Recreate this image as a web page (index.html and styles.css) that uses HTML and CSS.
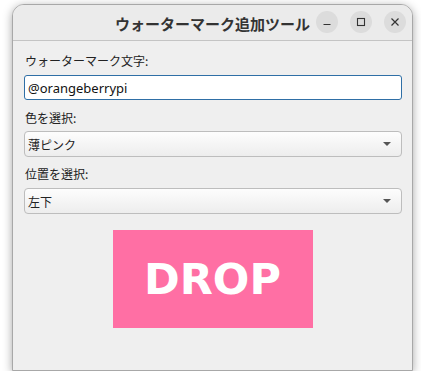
FILE: index.html
```html
<!DOCTYPE html>
<html lang="ja">
<head>
	<meta charset="UTF-8">
	<meta name="viewport" content="width=device-width, initial-scale=1.0">
	<title>ウォーターマーク追加ツール</title>
	<link rel="stylesheet" href="styles.css">
</head>
<body>
	<div class="window">
		<div class="titlebar">
			<div class="title">ウォーターマーク追加ツール</div>
			<div class="controls">
				<span class="ctl-btn">
					<svg width="10" height="10" viewBox="0 0 10 10"><path d="M1.5 7.5h7" stroke="#333" stroke-width="1.2"/></svg>
				</span>
				<span class="ctl-btn">
					<svg width="10" height="10" viewBox="0 0 10 10"><rect x="1.5" y="1.5" width="7" height="7" fill="none" stroke="#333" stroke-width="1.1"/></svg>
				</span>
				<span class="ctl-btn">
					<svg width="10" height="10" viewBox="0 0 10 10"><path d="M1.5 1.5l7 7M8.5 1.5l-7 7" stroke="#333" stroke-width="1.2"/></svg>
				</span>
			</div>
		</div>
		<div class="content">
			<label class="field-label" for="text">ウォーターマーク文字:</label>
			<input type="text" id="text" class="text-input" value="@orangeberrypi">

			<label class="field-label second">色を選択:</label>
			<div class="combo">
				<span>薄ピンク</span>
				<span class="arrow"></span>
			</div>

			<label class="field-label">位置を選択:</label>
			<div class="combo">
				<span>左下</span>
				<span class="arrow"></span>
			</div>

			<div class="drop-wrap">
				<div class="drop-area">DROP</div>
			</div>
		</div>
	</div>
</body>
</html>
```

FILE: styles.css
```css
body {
	background-color: #fff;
	margin: 0;
	padding: 0;
	font-family: "Noto Sans CJK JP", "Noto Sans", sans-serif;
	color: #222;
}

.window {
	margin: 4px 0 0 12px;
	width: 401px;
	height: 367px;
	box-sizing: border-box;
	background-color: #efefef;
	border: 1px solid #a8a8a8;
	border-radius: 12px 12px 0 0;
	box-shadow: 0 2px 10px rgba(0, 0, 0, 0.35);
	display: flex;
	flex-direction: column;
	overflow: hidden;
}

.titlebar {
	height: 35px;
	flex-shrink: 0;
	background-color: #ebebeb;
	border-bottom: 1px solid #c4c4c4;
	display: flex;
	align-items: center;
	justify-content: center;
	position: relative;
}

.title {
	font-size: 15px;
	font-weight: bold;
	color: #333;
	padding-top: 1px;
}

.controls {
	position: absolute;
	right: 6px;
	top: 6px;
	display: flex;
	gap: 12px;
}

.ctl-btn {
	width: 22px;
	height: 22px;
	border-radius: 50%;
	background-color: #dcdcdc;
	display: flex;
	align-items: center;
	justify-content: center;
}

.content {
	padding: 8px 10px 0 11px;
	display: flex;
	flex-direction: column;
}

.field-label {
	font-size: 12px;
	line-height: 24px;
	height: 20px;
	margin-left: 1px;
	margin-bottom: 6px;
	color: #222;
}
.field-label.second {
	margin-bottom: 5px;
}

.text-input {
	height: 25px;
	box-sizing: border-box;
	border: 1px solid #2f6fa6;
	border-radius: 3px;
	background-color: #fff;
	padding: 0 3px;
	font-family: "Noto Sans", "Noto Sans CJK JP", sans-serif;
	font-size: 13px;
	color: #111;
	outline: none;
	margin-bottom: 6px;
}

.combo {
	height: 26px;
	box-sizing: border-box;
	border: 1px solid #bdbdbd;
	border-radius: 4px;
	background: linear-gradient(#fdfdfd, #ededed);
	display: flex;
	align-items: center;
	justify-content: space-between;
	padding: 0 8px 0 3px;
	font-size: 12px;
	margin-bottom: 5px;
}

.arrow {
	width: 0;
	height: 0;
	border-left: 4px solid transparent;
	border-right: 4px solid transparent;
	border-top: 4px solid #555;
	margin-right: 2px;
}

.drop-wrap {
	display: flex;
	justify-content: center;
	margin-top: 11px;
}

.drop-area {
	width: 200px;
	height: 98px;
	background-color: #ff6fa4;
	color: #fff;
	font-family: "DejaVu Sans", sans-serif;
	font-weight: bold;
	font-size: 43px;
	display: flex;
	align-items: center;
	justify-content: center;
	margin-right: 1px;
}
```
